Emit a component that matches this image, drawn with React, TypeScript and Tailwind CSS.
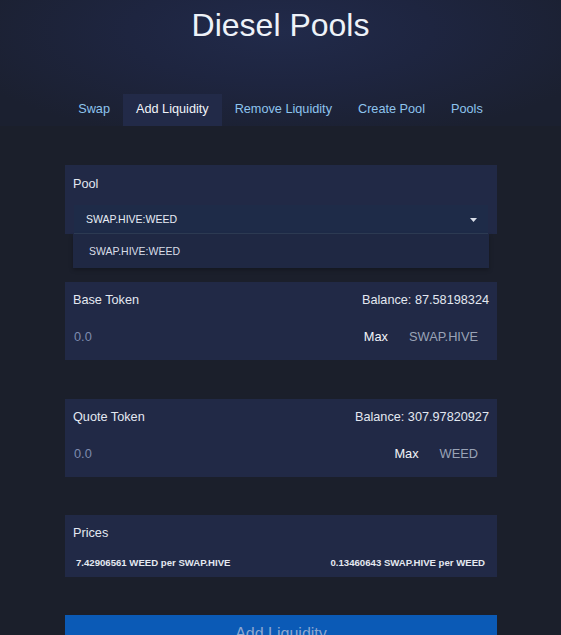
import React from "react";

function Caret() {
  return (
    <svg width="7" height="4" viewBox="0 0 7 4" className="block">
      <path d="M0 0 L7 0 L3.5 4 Z" fill="#d9dee8" />
    </svg>
  );
}

function TokenCard({ label, balance, token }: { label: string; balance: string; token: string }) {
  return (
    <div className="bg-[#212946] pt-[11px] px-[8px] pb-[6px]">
      <div className="flex justify-between items-center h-[15px] text-[12.7px] text-[#e3e8f1]">
        <span>{label}</span>
        <span>Balance: {balance}</span>
      </div>
      <div className="mt-[11px] h-[35px] flex items-center text-[12.8px]">
        <input
          placeholder="0.0"
          className="flex-1 min-w-0 bg-transparent outline-none pl-[1px] text-[#e3e8f1] placeholder:text-[#7d8bae]"
        />
        <span className="text-[#f2f4f8] pr-[21px]">Max</span>
        <span className="text-[#9aa3b6] pr-[11px]">{token}</span>
      </div>
    </div>
  );
}

export default function App() {
  const nav = ["Swap", "Add Liquidity", "Remove Liquidity", "Create Pool", "Pools"];
  return (
    <div className="min-h-screen bg-[#1b1f2b] font-['Liberation_Sans',Arial,sans-serif]">
      <header className="h-[126px] flex flex-col items-center bg-[radial-gradient(ellipse_60%_90%_at_50%_25%,#212a4a_0%,#1e2540_45%,#1b2030_100%)]">
        <h1 className="pt-[9px] text-[32px] leading-none text-[#eef2f8]">Diesel Pools</h1>
        <nav className="mt-auto flex justify-center">
          {nav.map((n) => (
            <div
              key={n}
              className={
                "h-[32px] px-[13px] flex items-center text-[12.7px] " +
                (n === "Add Liquidity" ? "bg-[#222a48] text-[#f0f4fa]" : "text-[#8ec4ee]")
              }
            >
              {n}
            </div>
          ))}
        </nav>
      </header>

      <main className="ml-[65px] w-[432px] pb-10">
        <div className="relative mt-[39px] bg-[#212946] pt-[12px] px-[9px]">
          <div className="h-[15px] flex items-center text-[12.7px] text-[#e3e8f1] -ml-[1px]">Pool</div>
          <div className="mt-[13px] h-[29px] pt-[2px] bg-[#1e2b48] border-b border-[#2e3c55] flex items-center justify-between pl-[12px] pr-[11px]">
            <span className="text-[10.5px] text-[#e8edf5]">SWAP.HIVE:WEED</span>
            <Caret />
          </div>
          <div className="absolute left-[8px] right-[8px] top-[69px] h-[34px] pt-[2px] bg-[#1f2843] flex items-center pl-[16px] text-[10.5px] text-[#d9dee8] shadow-[0_2px_4px_rgba(0,0,0,0.25)] z-10">
            SWAP.HIVE:WEED
          </div>
        </div>

        <div className="mt-[48px]">
          <TokenCard label="Base Token" balance="87.58198324" token="SWAP.HIVE" />
        </div>
        <div className="mt-[39px]">
          <TokenCard label="Quote Token" balance="307.97820927" token="WEED" />
        </div>

        <div className="mt-[38px] bg-[#212946] pt-[11px] px-[8px] pb-[7px]">
          <div className="h-[15px] flex items-center text-[12.7px] text-[#e3e8f1]">Prices</div>
          <div className="mt-[15px] h-[14px] flex items-center justify-between pl-[3px] pr-[4px] text-[9.6px] font-bold text-[#e4e8f0]">
            <span>7.42906561 WEED per SWAP.HIVE</span>
            <span>0.13460643 SWAP.HIVE per WEED</span>
          </div>
        </div>

        <button className="mt-[38px] w-full bg-[#0b5ab6] pt-[7px] pb-[10px] text-[16px] leading-[24px] text-[#8ea8d0]">
          Add Liquidity
        </button>
      </main>
    </div>
  );
}
